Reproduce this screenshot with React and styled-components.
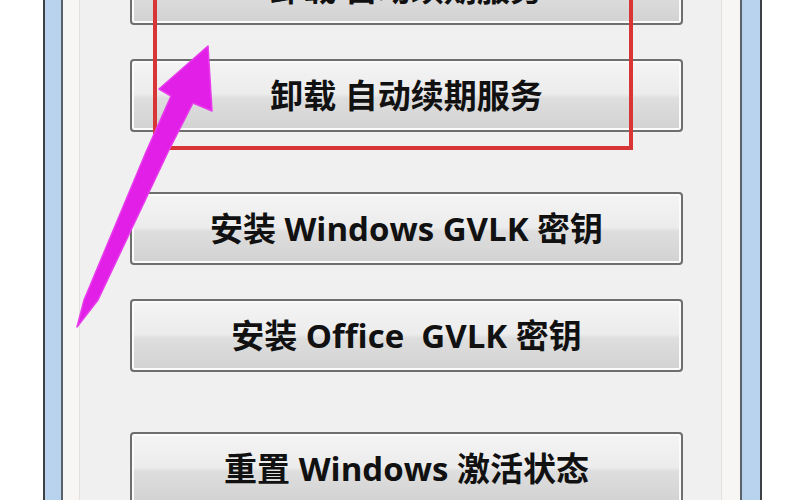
import React from 'react';
import styled, { createGlobalStyle } from 'styled-components';

const GlobalStyle = createGlobalStyle`
  html, body {
    margin: 0;
    padding: 0;
    background: #ffffff;
    overflow: hidden;
  }
`;

const Stage = styled.div`
  position: relative;
  width: 800px;
  height: 500px;
  overflow: hidden;
  background: #ffffff;
`;

const Window = styled.div`
  box-sizing: border-box;
  width: 719px;
  height: 500px;
  margin-left: 43px;
  border-left: 2px solid #3d4146;
  border-right: 2px solid #3d4146;
  padding: 0 18px 0 16px;
  background: linear-gradient(90deg, #b9d3ee, #a7c4e6 50%, #b9d3ee);
`;

const Client = styled.div`
  box-sizing: border-box;
  height: 100%;
  border-left: 2px solid #59616b;
  border-right: 2px solid #59616b;
  background: #f8f6f5;
  padding: 0 18px 0 16px;
`;

const Panel = styled.div`
  box-sizing: border-box;
  display: flex;
  flex-direction: column;
  height: 100%;
  background: #f0f0f0;
  border-left: 1px solid #e4e0de;
  border-right: 1px solid #e4e0de;
  padding-left: 50px;
`;

const Stack = styled.div`
  display: flex;
  flex-direction: column;
  gap: 60px;
  margin-top: -48px;
`;

const Group = styled.div`
  position: relative;
  display: flex;
  flex-direction: column;
  gap: 34px;
`;

const Button = styled.button`
  box-sizing: border-box;
  flex: none;
  width: 553px;
  height: 73px;
  padding: 0;
  border: 2px solid #6e6e6e;
  border-radius: 4px;
  box-shadow: inset 0 0 0 2px #fbfbfb;
  background: linear-gradient(
    180deg,
    #f4f4f4 0%,
    #ececec 48%,
    #dedede 54%,
    #d2d2d2 100%
  );
  color: #111111;
  font-family: 'Open Sans', 'Noto Sans CJK SC', sans-serif;
  font-weight: 700;
  font-size: 33px;
  line-height: 1;
  white-space: pre;
  text-align: center;
`;

const Highlight = styled.div`
  position: absolute;
  left: 23px;
  top: -60px;
  width: 480px;
  bottom: -18px;
  box-sizing: border-box;
  border: 4px solid #d83636;
  pointer-events: none;
`;

const Pointer = styled.svg`
  position: absolute;
  left: 0;
  top: 0;
  width: 800px;
  height: 500px;
  pointer-events: none;
`;

const groups = [
  { marked: true, labels: ['卸载 自动续期服务', '卸载 自动续期服务'] },
  { marked: false, labels: ['安装 Windows GVLK 密钥', '安装 Office  GVLK 密钥'] },
  { marked: false, labels: ['重置 Windows 激活状态'] },
];

const App = () => (
  <Stage>
    <GlobalStyle />
    <Window>
      <Client>
        <Panel>
          <Stack>
            {groups.map((group, i) => (
              <Group key={i}>
                {group.labels.map((label, j) => (
                  <Button key={j}>{label}</Button>
                ))}
                {group.marked && <Highlight />}
              </Group>
            ))}
          </Stack>
        </Panel>
      </Client>
    </Window>
    <Pointer viewBox="0 0 800 500">
      <polygon
        points="208,46 212,111 193,103 168,152 98,300 77,327 84,300 146,152 171,96 159,89"
        fill="#e21fe6"
        stroke="#e83cec"
        strokeWidth="1.5"
        strokeLinejoin="round"
      />
    </Pointer>
  </Stage>
);

export default App;
